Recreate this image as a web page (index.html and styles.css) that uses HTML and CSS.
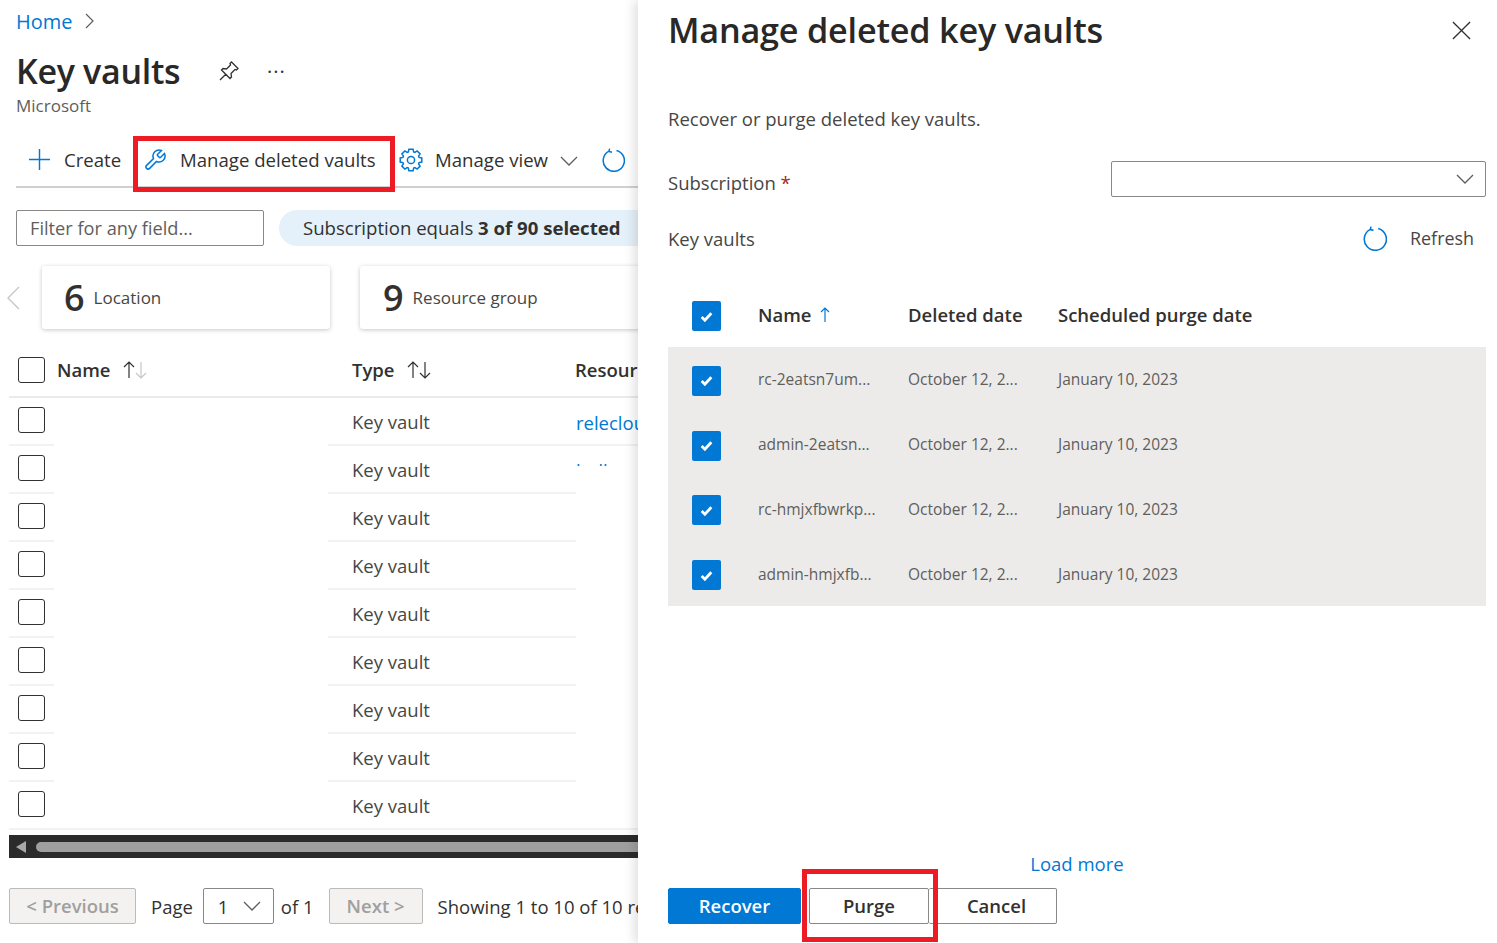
FILE: index.html
```html
<!DOCTYPE html>
<html lang="en">
<head>
    <meta charset="UTF-8">
    <title>Key vaults</title>
    <link rel="stylesheet" href="styles.css">
</head>
<body>
<div class="page">
    <div class="left">
        <div class="crumb"><a href="#">Home</a>
            <svg class="crumb-arrow" viewBox="0 0 10 16"><path d="M2 1l7 7-7 7"/></svg>
        </div>
        <div class="title-row">
            <h1>Key vaults</h1>
            <svg class="pin" viewBox="0 0 24 24"><path d="M9 15L3 21M14.5 3L21 9.5 19.5 11 18 10.5 14 14.5 14.5 18 13 19.5 4.5 11 6 9.5 9.5 10 13.5 6 13 4.5z"/></svg>
            <span class="dots">···</span>
        </div>
        <div class="sub">Microsoft</div>

        <div class="toolbar">
            <span class="tool tool-create">
                <svg class="ico" viewBox="0 0 24 24"><path d="M12 1v22M1 12h22"/></svg>Create
            </span>
            <span class="tool tool-manage">
                <svg class="ico" viewBox="0 0 24 24"><path d="M14.7 6.3a1 1 0 0 0 0 1.4l1.6 1.6a1 1 0 0 0 1.4 0l3.77-3.77a6 6 0 0 1-7.94 7.94l-6.91 6.91a2.12 2.12 0 0 1-3-3l6.91-6.91a6 6 0 0 1 7.94-7.94l-3.76 3.76z"/></svg>Manage deleted vaults
                <i class="mark mark-top"></i>
            </span>
            <span class="tool tool-view">
                <svg class="ico" viewBox="0 0 24 24"><path d="M9.37 3.92L9.9 1.2H14.1L14.63 3.92 15.86 4.43 18.15 2.88 21.12 5.85 19.57 8.14 20.08 9.37 22.8 9.9V14.1L20.08 14.63 19.57 15.86 21.12 18.15 18.15 21.12 15.86 19.57 14.63 20.08 14.1 22.8H9.9L9.37 20.08 8.14 19.57 5.85 21.12 2.88 18.15 4.43 15.86 3.92 14.63 1.2 14.1V9.9L3.92 9.37 4.43 8.14 2.88 5.85 5.85 2.88 8.14 4.43z"/><circle cx="12" cy="12" r="3.6"/></svg>Manage view
                <svg class="chev" viewBox="0 0 18 10"><path d="M1 1l8 8 8-8"/></svg>
            </span>
            <svg class="ico tool-refresh" viewBox="0 0 24 24"><path d="M8 3.2A10.6 10.6 0 1 0 15.5 2.4M8.6 .6L8 3.4l3 .8"/></svg>
        </div>

        <div class="filters">
            <div class="filter-box">Filter for any field...</div>
            <div class="pill">Subscription equals <b>3 of 90 selected</b></div>
        </div>

        <div class="cards">
            <svg class="card-arrow" viewBox="0 0 14 24"><path d="M13 1L2 12l11 11"/></svg>
            <div class="card card-loc"><span class="num">6</span>Location</div>
            <div class="card card-rg"><span class="num">9</span>Resource group</div>
        </div>

        <div class="table">
            <div class="thead">
                <span class="box"></span>
                <span class="th th-name">Name
                    <svg class="sort" viewBox="0 0 26 20"><path d="M7 18V2M2 7l5-5 5 5"/><path class="off" d="M19 2v16M14 13l5 5 5-5"/></svg>
                </span>
                <span class="th th-type">Type
                    <svg class="sort" viewBox="0 0 26 20"><path d="M7 18V2M2 7l5-5 5 5M19 2v16M14 13l5 5 5-5"/></svg>
                </span>
                <span class="th th-res">Resource group</span>
            </div>
            <div class="tr"><span class="c-check"><span class="box"></span></span><span class="c-name"></span><span class="c-type">Key vault</span><span class="c-res"><a href="#">releclouds</a></span></div>
            <div class="tr"><span class="c-check"><span class="box"></span></span><span class="c-name"></span><span class="c-type">Key vault</span><span class="c-res"><a href="#">lodl</a></span></div>
            <div class="tr"><span class="c-check"><span class="box"></span></span><span class="c-name"></span><span class="c-type">Key vault</span><span class="c-res"></span></div>
            <div class="tr"><span class="c-check"><span class="box"></span></span><span class="c-name"></span><span class="c-type">Key vault</span><span class="c-res"></span></div>
            <div class="tr"><span class="c-check"><span class="box"></span></span><span class="c-name"></span><span class="c-type">Key vault</span><span class="c-res"></span></div>
            <div class="tr"><span class="c-check"><span class="box"></span></span><span class="c-name"></span><span class="c-type">Key vault</span><span class="c-res"></span></div>
            <div class="tr"><span class="c-check"><span class="box"></span></span><span class="c-name"></span><span class="c-type">Key vault</span><span class="c-res"></span></div>
            <div class="tr"><span class="c-check"><span class="box"></span></span><span class="c-name"></span><span class="c-type">Key vault</span><span class="c-res"></span></div>
            <div class="tr tr-last"><span class="c-check"><span class="box"></span></span><span class="c-name"></span><span class="c-type">Key vault</span><span class="c-res"></span></div>
            <div class="redacted"></div>
        </div>

        <div class="hscroll">
            <span class="hscroll-arrow"></span>
            <span class="hscroll-thumb"></span>
        </div>

        <div class="pager">
            <span class="pg-btn pg-prev">&lt; Previous</span>
            <span class="pg-page">Page</span>
            <span class="pg-select">1 <svg class="chev" viewBox="0 0 18 10"><path d="M1 1l8 8 8-8"/></svg></span>
            <span class="pg-of">of 1</span>
            <span class="pg-btn pg-next">Next &gt;</span>
            <span class="pg-info">Showing 1 to 10 of 10 records.</span>
        </div>
    </div>

    <div class="panel">
        <div class="panel-head">
            <h2>Manage deleted key vaults</h2>
            <svg class="close" viewBox="0 0 20 20"><path d="M1 1l18 18M19 1L1 19"/></svg>
        </div>
        <p class="desc">Recover or purge deleted key vaults.</p>

        <div class="form-row">
            <label>Subscription <span class="req">*</span></label>
            <div class="select"><svg class="chev" viewBox="0 0 18 10"><path d="M1 1l8 8 8-8"/></svg></div>
        </div>

        <div class="kv-row">
            <span>Key vaults</span>
            <span class="refresh">
                <svg class="ico" viewBox="0 0 24 24"><path d="M8 3.2A10.6 10.6 0 1 0 15.5 2.4M8.6 .6L8 3.4l3 .8"/></svg>Refresh
            </span>
        </div>

        <div class="dtable">
            <div class="drow dhead">
                <span class="cb"><svg viewBox="0 0 14 14"><path d="M2.5 7.5l3 3 6-6.5"/></svg></span>
                <span>Name <svg class="up" viewBox="0 0 10 16"><path d="M5 15V1M1 5l4-4 4 4"/></svg></span>
                <span>Deleted date</span>
                <span>Scheduled purge date</span>
            </div>
            <div class="dbody">
                <div class="drow">
                    <span class="cb"><svg viewBox="0 0 14 14"><path d="M2.5 7.5l3 3 6-6.5"/></svg></span>
                    <span>rc-2eatsn7um...</span><span>October 12, 2...</span><span>January 10, 2023</span>
                </div>
                <div class="drow">
                    <span class="cb"><svg viewBox="0 0 14 14"><path d="M2.5 7.5l3 3 6-6.5"/></svg></span>
                    <span>admin-2eatsn...</span><span>October 12, 2...</span><span>January 10, 2023</span>
                </div>
                <div class="drow">
                    <span class="cb"><svg viewBox="0 0 14 14"><path d="M2.5 7.5l3 3 6-6.5"/></svg></span>
                    <span>rc-hmjxfbwrkp...</span><span>October 12, 2...</span><span>January 10, 2023</span>
                </div>
                <div class="drow">
                    <span class="cb"><svg viewBox="0 0 14 14"><path d="M2.5 7.5l3 3 6-6.5"/></svg></span>
                    <span>admin-hmjxfb...</span><span>October 12, 2...</span><span>January 10, 2023</span>
                </div>
            </div>
        </div>

        <div class="load-more"><a href="#">Load more</a></div>
        <div class="actions">
            <span class="btn btn-primary">Recover</span>
            <span class="btn btn-purge">Purge<i class="mark mark-purge"></i></span>
            <span class="btn btn-cancel">Cancel</span>
        </div>
    </div>
</div>
</body>
</html>
```

FILE: styles.css
```css
* { box-sizing: border-box; }
html, body { margin: 0; height: 100%; }
body {
    font-family: "Open Sans", "Noto Sans", "Liberation Sans", sans-serif;
    color: #323130;
    background: #fff;
    overflow: hidden;
}
a { color: #0078d4; text-decoration: none; }
svg { fill: none; stroke: currentColor; stroke-width: 1.5; display: block; flex: none; }

.page { display: flex; width: 1497px; height: 943px; overflow: hidden; }

/* left blade */
.left { width: 638px; flex: none; overflow: hidden; }

.crumb { height: 42px; padding-left: 16px; display: flex; align-items: center; gap: 11px; font-size: 20px; }
.crumb-arrow { width: 10px; height: 16px; color: #605e5c; stroke-width: 1.2; }

.title-row { height: 55px; padding: 2px 0 0 16px; display: flex; align-items: center; }
h1 { margin: 0; font-size: 34px; font-weight: 600; width: 201px; color: #292827; letter-spacing: -.3px; }
.pin { width: 24px; height: 24px; color: #323130; stroke-width: 1.3; }
.dots { margin: 3px 0 0 26px; font-size: 20px; line-height: 1; letter-spacing: 1px; }

.sub { height: 18px; padding-left: 16px; font-size: 17px; line-height: 18px; color: #605e5c; }

.toolbar {
    margin: 22px 0 0 16px;
    height: 51px;
    border-bottom: 2px solid #d2d0ce;
    display: flex;
    align-items: center;
    font-size: 18.6px;
    position: relative;
}
.tool { display: flex; align-items: center; position: relative; height: 100%; padding-bottom: 4px; }
.tool .ico { color: #0078d4; margin-right: 12px; }
.ico { width: 24px; height: 24px; color: #0078d4; }
.tool-create { margin-left: 12px; width: 115px; }
.tool-create .ico { margin-right: 13px; width: 23px; height: 23px; }
.tool-manage { width: 256px; white-space: nowrap; }
.tool-manage .ico { margin-right: 13px; }
.tool-view { white-space: nowrap; }
.tool-view .chev { margin: 2px 0 0 12px; }
.tool-refresh { margin: 0 0 4px 23px; }
.chev { width: 18px; height: 10px; color: #605e5c; stroke-width: 1.3; }

/* the red boxes drawn on top of the screenshot */
.mark { position: absolute; z-index: 2; border: 5px solid #ed1c24; pointer-events: none; display: block; }
.mark-top { left: -10px; top: -1px; width: 262px; height: 56px; }
.mark-purge { left: -8px; top: -20px; width: 136px; height: 73px; }

.filters { margin: 22px 0 0 16px; height: 36px; display: flex; gap: 15px; font-size: 18.2px; white-space: nowrap; }
.filter-box {
    width: 248px;
    flex: none;
    border: 1px solid #8a8886;
    border-radius: 2px;
    padding-left: 13px;
    line-height: 34px;
    color: #605e5c;
}
.pill {
    flex: 1;
    background: #e5f1fa;
    border-radius: 18px 0 0 18px;
    padding-left: 24px;
    line-height: 36px;
    font-size: 18.6px;
}
.pill b { font-weight: 700; }

.cards { margin: 20px 0 0 6px; height: 63px; display: flex; align-items: center; }
.card-arrow { width: 14px; height: 24px; color: #c8c6c4; stroke-width: 1.4; margin-right: 22px; }
.card {
    height: 63px;
    background: #fff;
    border-radius: 3px;
    box-shadow: 0 1px 4px rgba(0, 0, 0, .22);
    display: flex;
    align-items: center;
    font-size: 17px;
    color: #484644;
    flex: none;
}
.card .num { font-size: 36px; font-weight: 600; color: #323130; margin-right: 9px; }
.card-loc { width: 288px; padding-left: 22px; }
.card-rg { width: 300px; margin-left: 30px; padding-left: 23px; }

.table { margin: 17px 0 0 9px; position: relative; }
.box {
    display: block;
    width: 27px;
    height: 26px;
    border: 1.5px solid #323130;
    border-radius: 3px;
    background: #fff;
}
.thead {
    height: 52px;
    border-bottom: 2px solid #edebe9;
    display: grid;
    grid-template-columns: 39px 295px 223px 1fr;
    align-items: center;
    padding: 0 0 3px 9px;
    font-size: 18.5px;
    font-weight: 600;
    white-space: nowrap;
    overflow: hidden;
}
.th { display: flex; align-items: center; }
.sort { width: 26px; height: 20px; margin-left: 11px; color: #323130; stroke-width: 1.2; }
.sort .off { color: #c8c6c4; stroke: #c8c6c4; }

.tr {
    height: 48px;
    display: grid;
    grid-template-columns: 45px 274px 248px 1fr;
    align-items: stretch;
    font-size: 18.5px;
    color: #484644;
    white-space: nowrap;
    overflow: hidden;
}
.tr > span { display: flex; align-items: center; border-bottom: 2px solid #f3f2f1; }
.tr > .c-name { border-bottom-color: transparent; }
.tr-last > .c-name { border-bottom-color: #f3f2f1; }
.c-check { padding: 0 0 2px 9px; }
.c-type { padding-left: 24px; }
.c-res { padding-left: 0; }
.c-res a { margin-top: 3px; }

/* covers the blanked out part of the resource group column */
.redacted { position: absolute; left: 567px; top: 120px; width: 62px; height: 358px; background: #fff; }

.hscroll { margin: 5px 0 0 9px; height: 23px; background: #2b2b2b; display: flex; align-items: center; padding-left: 7px; }
.hscroll-arrow { width: 0; height: 0; border-style: solid; border-width: 6px 10px 6px 0; border-color: transparent #a8a8a8 transparent transparent; }
.hscroll-thumb { margin-left: 10px; flex: 1; height: 10px; background: #9f9f9f; border-radius: 5px 0 0 5px; }

.pager { margin: 30px 0 0 9px; height: 36px; display: flex; align-items: center; font-size: 18.5px; white-space: nowrap; }
.pager > span { flex: none; }
.pg-btn {
    height: 36px;
    line-height: 34px;
    text-align: center;
    border: 1px solid #bdbbb9;
    border-radius: 2px;
    background: #f3f2f1;
    color: #a19f9d;
    font-weight: 600;
}
.pg-prev { width: 127px; }
.pg-page { margin-left: 15px; }
.pg-select {
    margin-left: 10px;
    width: 71px;
    height: 36px;
    border: 1px solid #8a8886;
    border-radius: 2px;
    display: flex;
    align-items: center;
    justify-content: space-between;
    padding: 0 12px 0 14px;
}
.pg-of { margin-left: 7px; }
.pg-next { width: 94px; margin-left: 15px; }
.pg-info { margin-left: 15px; }

/* right panel */
.panel {
    flex: 1;
    padding: 0 11px 0 30px;
    display: flex;
    flex-direction: column;
    background: #fff;
    box-shadow: -4px 0 10px rgba(0, 0, 0, .12);
    z-index: 1;
}
.panel-head { height: 58px; display: flex; align-items: center; justify-content: space-between; }
h2 { margin: 0; font-size: 34.2px; font-weight: 600; color: #292827; letter-spacing: -.2px; white-space: nowrap; }
.close { width: 19px; height: 19px; margin: 2px 15px 0 0; color: #323130; stroke-width: 1.4; }
.desc { margin: 48px 0 0; height: 26px; line-height: 26px; font-size: 18.5px; color: #484644; }

.form-row { margin-top: 29px; height: 36px; display: flex; align-items: center; justify-content: space-between; font-size: 18.5px; color: #484644; }
.form-row label { padding-top: 6px; }
.req { color: #a4262c; }
.select {
    width: 375px;
    height: 36px;
    border: 1px solid #8a8886;
    border-radius: 2px;
    display: flex;
    align-items: center;
    justify-content: flex-end;
    padding-right: 11px;
}

.kv-row { margin-top: 26px; height: 30px; display: flex; align-items: center; justify-content: space-between; font-size: 18.5px; color: #484644; }
.refresh { display: flex; align-items: center; gap: 23px; margin-right: 12px; font-size: 17.9px; }
.refresh .ico { width: 25px; height: 25px; }

.dtable { margin-top: 30px; }
.drow {
    display: grid;
    grid-template-columns: 66px 150px 150px 1fr;
    align-items: center;
    padding: 3px 0 0 24px;
    height: 64.75px;
    font-size: 15.5px;
    color: #605e5c;
    white-space: nowrap;
}
.dhead { height: 64px; font-size: 18.5px; font-weight: 600; color: #323130; padding-top: 2px; }
.dhead > span { display: flex; align-items: center; gap: 8px; }
.dhead > span:not(.cb) { margin-top: -3px; }
.dbody { background: #edebe9; }
.dbody .drow > span:not(.cb) { margin-top: -3px; }
.cb {
    width: 29px;
    height: 30px;
    background: #0078d4;
    border-radius: 2px;
    display: flex !important;
    align-items: center;
    justify-content: center;
    color: #fff;
}
.cb svg { width: 15px; height: 15px; stroke-width: 2.6; }
.up { width: 10px; height: 16px; color: #0078d4; stroke-width: 1.2; }

.load-more { margin-top: auto; height: 24px; line-height: 24px; text-align: center; font-size: 18.5px; width: 818px; }
.actions { margin: 12px 0 19px; height: 36px; display: flex; font-size: 18.5px; font-weight: 600; }
.btn { height: 36px; line-height: 34px; text-align: center; border: 1px solid #8a8886; border-radius: 2px; position: relative; }
.btn-primary { width: 133px; background: #0078d4; border-color: #0078d4; color: #fff; }
.btn-purge { width: 120px; margin-left: 8px; }
.btn-cancel { width: 128px; border-left: 0; padding-left: 8px; }
```
